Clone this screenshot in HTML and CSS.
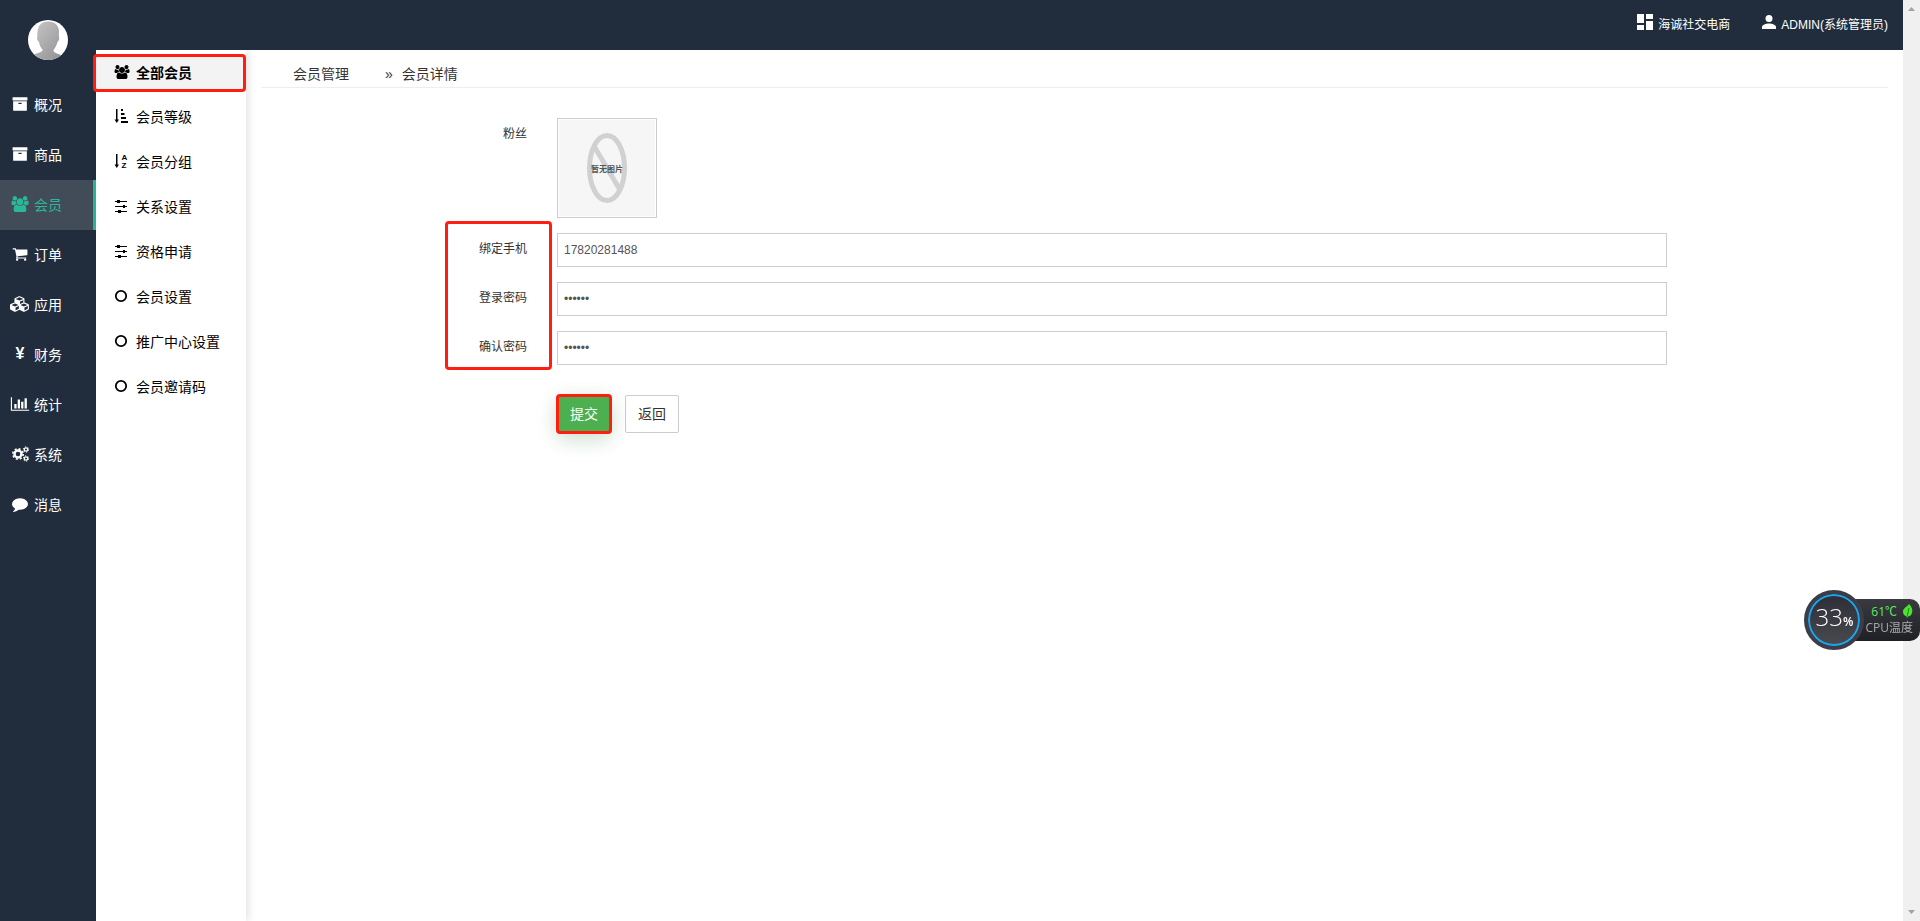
FILE: index.html
```
<!DOCTYPE html>
<html lang="zh-CN">
<head>
    <meta charset="UTF-8">
    <meta name="viewport" content="width=device-width, initial-scale=1.0">
    <title>会员详情</title>
    <link rel="stylesheet" href="styles.css">
</head>
<body>
    <!-- Shared icons -->
    <svg class="sprite" width="0" height="0" aria-hidden="true">
        <symbol id="i-users" viewBox="0 0 1920 1792"><path d="M593 896q-162 5-265 128h-134q-82 0-138-40.5t-56-118.5q0-353 124-353 6 0 43.5 21t97.5 42.5 119 21.5q67 0 133-23-5 37-5 66 0 159 93 256zm1071 637q0 120-73 189.500t-194 69.500h-874q-121 0-194-69.500t-73-189.500q0-53 3.500-103.500t14-109 26.500-108.500 43-97.500 62-81 85.500-53.500 111.500-20q10 0 43 21.500t73 48 107 48 135 21.500 135-21.500 107-48 73-48 43-21.500q61 0 111.500 20t85.500 53.500 62 81 43 97.500 26.500 108.500 14 109 3.500 103.500zm-1024-1277q0 106-75 181t-181 75-181-75-75-181 75-181 181-75 181 75 75 181zm704 384q0 159-112.500 271.500t-271.500 112.500-271.500-112.500-112.500-271.500 112.500-271.500 271.500-112.500 271.500 112.500 112.500 271.500zm576 225q0 78-56 118.500t-138 40.500h-134q-103-123-265-128 93-97 93-256 0-29-5-66 66 23 133 23 59 0 119-21.500t97.500-42.500 43.500-21q124 0 124 353zm-128-609q0 106-75 181t-181 75-181-75-75-181 75-181 181-75 181 75 75 181z"/></symbol>
        <symbol id="i-archive" viewBox="0 0 1792 1792"><path d="M1088 832q0-26-19-45t-45-19h-256q-26 0-45 19t-19 45 19 45 45 19h256q26 0 45-19t19-45zm576-192v960q0 26-19 45t-45 19h-1408q-26 0-45-19t-19-45v-960q0-26 19-45t45-19h1408q26 0 45 19t19 45zm64-448v256q0 26-19 45t-45 19h-1536q-26 0-45-19t-19-45v-256q0-26 19-45t45-19h1536q26 0 45 19t19 45z"/></symbol>
        <symbol id="i-sliders" viewBox="0 0 14 14"><path d="M1 2h12v1H1zM1 7h12v1H1zM1 12h12v1H1zM3 1h3v3H3zM9 6h2v3H9zM4 11h3v3H4z"/></symbol>
        <symbol id="i-circle" viewBox="0 0 14 14"><circle cx="7" cy="7" r="5.200" fill="none" stroke="currentColor" stroke-width="1.800"/></symbol>
    </svg>

    <div class="page">
        <nav class="sidebar">
            <div class="avatar">
                <svg width="40" height="40" viewBox="0 0 40 40">
                    <defs>
                        <linearGradient id="person" x1="0" y1="0" x2="1" y2="1">
                            <stop offset="0" stop-color="#c9c9c9"/>
                            <stop offset="1" stop-color="#8d8e90"/>
                        </linearGradient>
                    </defs>
                    <path fill="url(#person)" d="M20 1.500c7 0 11 4 11 10 0 2-.3 4 0 5.500.6 2-.4 4-1.500 5-1 4-3 6.500-4 8-.5 2 2 3 9 5.500l2 5H3l2-6c7-2 10-3 9.500-5-1.500-1.500-3-4-3.500-7.500-1.500-1.500-2.500-3.500-1.700-5.500C9 5.500 13 1.500 20 1.500z"/>
                </svg>
            </div>
            <a href="#"><svg><use href="#i-archive"/></svg>概况</a>
            <a href="#"><svg><use href="#i-archive"/></svg>商品</a>
            <a href="#" class="active"><svg><use href="#i-users"/></svg>会员</a>
            <a href="#"><svg viewBox="0 0 1792 1792"><path d="M704 1536q0 52-38 90t-90 38-90-38-38-90 38-90 90-38 90 38 38 90zm896 0q0 52-38 90t-90 38-90-38-38-90 38-90 90-38 90 38 38 90zm128-1088v512q0 24-16.500 42.500t-40.500 21.500l-1044 122q13 60 13 70 0 16-24 64h920q26 0 45 19t19 45-19 45-45 19h-1024q-26 0-45-19t-19-45q0-11 8-31.500t16-36 21.500-40 15.500-29.500l-177-823h-204q-26 0-45-19t-19-45 19-45 45-19h256q16 0 28.500 6.500t19.500 15.500 13 24.500 8 26 5.500 29.500 4.500 26h1201q26 0 45 19t19 45z"/></svg>订单</a>
            <a href="#"><svg viewBox="0 0 2304 1792"><path d="M640 1632l384-192v-314l-384 164v342zm-64-454l404-173-404-173-404 173zm1088 454l384-192v-314l-384 164v342zm-64-454l404-173-404-173-404 173zm-448-293l384-165v-266l-384 164v267zm-64-379l441-189-441-189-441 189zm1088 518v416q0 36-19 67t-52 47l-448 224q-25 14-57 14t-57-14l-448-224q-4-2-7-4-2 2-7 4l-448 224q-25 14-57 14t-57-14l-448-224q-33-16-52-47t-19-67v-416q0-38 21.500-70t56.500-48l434-186v-400q0-38 21.500-70t56.500-48l448-192q23-10 50-10t50 10l448 192q35 16 56.500 48t21.500 70v400l434 186q36 16 57 48t21 70z"/></svg>应用</a>
            <a href="#"><span class="yen">¥</span>财务</a>
            <a href="#"><svg viewBox="0 0 2048 1792"><path d="M640 896v512h-256v-512h256zm384-512v1024h-256v-1024h256zm1024 1152v128h-2048v-1536h128v1408h1920zm-640-896v768h-256v-768h256zm384-384v1152h-256v-1152h256z"/></svg>统计</a>
            <a href="#"><svg viewBox="0 0 20 16">
                <g fill="none" stroke="currentColor">
                    <circle cx="8" cy="8" r="3.500" stroke-width="2.400"/>
                    <circle cx="8" cy="8" r="5.200" stroke-width="1.600" stroke-dasharray="2 2.084"/>
                    <circle cx="16" cy="3.500" r="1.700" stroke-width="1.300"/>
                    <circle cx="16" cy="3.500" r="2.700" stroke-width="1" stroke-dasharray="1.300 1.527"/>
                    <circle cx="16" cy="12.500" r="1.700" stroke-width="1.300"/>
                    <circle cx="16" cy="12.500" r="2.700" stroke-width="1" stroke-dasharray="1.300 1.527"/>
                </g>
            </svg>系统</a>
            <a href="#"><svg viewBox="0 0 1792 1792"><path d="M1792 896q0 174-120 321.500t-326 233-450 85.500q-70 0-145-8-198 175-460 242-49 14-114 22h-5q-15 0-27-10.500t-16-27.500v-1q-3-4-.5-12t2-10 4.500-9.500l6-9 7-8.500 8-9q7-8 31-34.500t34.500-38 31-39.500 32.500-51 27-59 26-76q-157-89-247.500-220t-90.500-281q0-174 120-321.500t326-233 450-85.500 450 85.500 326 233 120 321.500z"/></svg>消息</a>
        </nav>

        <div class="main">
            <header class="topbar">
                <a href="#"><svg width="16" height="16" viewBox="0 0 16 16"><path d="M0 0h7v9H0zM9 0h7v5H9zM0 11h7v5H0zM9 7h7v9H9z"/></svg>海诚社交电商</a>
                <a href="#"><svg width="14" height="15" viewBox="0 0 14 15"><circle cx="7" cy="4.500" r="3.500"/><path d="M0 15v-2c0-2.200 4-3.500 7-3.500s7 1.300 7 3.500v2z"/></svg>ADMIN(系统管理员)</a>
            </header>

            <div class="body">
                <aside class="submenu">
                    <a href="#" class="active"><svg><use href="#i-users"/></svg>全部会员</a>
                    <a href="#"><svg viewBox="0 0 14 14"><path d="M2 0h1.500v10.500H5L2.800 14 .5 10.500H2zM7 0h2v2H7zM7 4h3.500v2H7zM7 8h5v2H7zM7 12h7v2H7z"/></svg>会员等级</a>
                    <a href="#"><svg viewBox="0 0 14 14"><path d="M2 0h1.500v10.500H5L2.800 14 .5 10.500H2z"/><text x="7.500" y="6">A</text><text x="7.500" y="14">Z</text></svg>会员分组</a>
                    <a href="#"><svg><use href="#i-sliders"/></svg>关系设置</a>
                    <a href="#"><svg><use href="#i-sliders"/></svg>资格申请</a>
                    <a href="#"><svg><use href="#i-circle"/></svg>会员设置</a>
                    <a href="#"><svg><use href="#i-circle"/></svg>推广中心设置</a>
                    <a href="#"><svg><use href="#i-circle"/></svg>会员邀请码</a>
                </aside>

                <main class="content">
                    <div class="breadcrumb">
                        <a href="#">会员管理</a>
                        <span>»</span>
                        <span>会员详情</span>
                    </div>

                    <form class="form">
                        <div class="row">
                            <span class="label">粉丝</span>
                            <div class="thumb">
                                <svg width="96" height="96" viewBox="0 0 96 96">
                                    <g fill="none" stroke="#d1d1d1" stroke-width="5">
                                        <ellipse cx="48" cy="48" rx="17.500" ry="32.500"/>
                                        <path d="M35 26l26 44"/>
                                    </g>
                                    <text x="48" y="52" text-anchor="middle">暂无图片</text>
                                </svg>
                            </div>
                        </div>
                        <div class="marked">
                            <div class="row">
                                <label class="label" for="mobile">绑定手机</label>
                                <input type="text" id="mobile" value="17820281488">
                            </div>
                            <div class="row">
                                <label class="label" for="pwd">登录密码</label>
                                <input type="password" id="pwd" value="123456">
                            </div>
                            <div class="row">
                                <label class="label" for="pwd2">确认密码</label>
                                <input type="password" id="pwd2" value="123456">
                            </div>
                        </div>
                        <div class="row actions">
                            <div class="buttons">
                                <button type="submit" class="btn btn-submit">提交</button>
                                <button type="button" class="btn">返回</button>
                            </div>
                        </div>
                    </form>
                </main>
            </div>
        </div>

        <div class="scrollbar">
            <svg width="7" height="4" viewBox="0 0 7 4"><path d="M3.500 0L7 4H0z"/></svg>
            <svg width="7" height="4" viewBox="0 0 7 4"><path d="M0 0h7L3.500 4z"/></svg>
        </div>
    </div>

    <!-- Floating CPU monitor -->
    <div class="monitor">
        <div class="gauge"><span>33</span><b>%</b></div>
        <div class="temp">
            <div class="degree">61℃
                <svg width="10" height="14" viewBox="0 0 10 14"><path d="M6 0c3 3 4 6 3 9-.7 2.500-2.500 3.500-4 3.500L4 14l-.5-1.500C1 11.500 0 9.500 0 7.500 0 4 4 3 6 0z" fill="#4be32d"/><path d="M6 4L4 13" stroke="#2a7d20" fill="none"/></svg>
            </div>
            <div>CPU温度</div>
        </div>
    </div>
</body>
</html>
```
FILE: styles.css
```
*,
*::before,
*::after {
    box-sizing: border-box;
}

body {
    margin: 0;
    font-family: "Liberation Sans", "Noto Sans CJK SC", sans-serif;
    font-size: 14px;
    color: #333;
    background: #fff;
}

a {
    color: inherit;
    text-decoration: none;
}

svg {
    fill: currentColor;
}

.sprite {
    position: absolute;
}

.page {
    display: flex;
    min-height: 100vh;
}

/* Left navigation */
.sidebar {
    width: 96px;
    flex: none;
    background: #212d3d;
    color: #fff;
}

.avatar {
    width: 40px;
    height: 40px;
    margin: 20px auto;
    border-radius: 50%;
    overflow: hidden;
    background: #fff;
}

.sidebar a {
    display: flex;
    align-items: center;
    gap: 4px;
    height: 50px;
    padding: 0 0 3px 10px;
}

.sidebar a svg {
    width: 20px;
    height: 16px;
}

.sidebar .active {
    color: #2bb898;
    background: #424c59;
    border-right: 3px solid #2bb898;
}

.yen {
    width: 20px;
    font-size: 16px;
    font-weight: bold;
    text-align: center;
}

/* Top bar */
.main {
    flex: 1;
    display: flex;
    flex-direction: column;
}

.topbar {
    display: flex;
    justify-content: flex-end;
    gap: 32px;
    height: 50px;
    padding: 14px 15px 0;
    background: #212d3d;
    color: #fff;
    font-size: 12px;
    line-height: 22px;
}

.topbar a {
    display: flex;
    gap: 5px;
}

.body {
    flex: 1;
    display: flex;
}

/* Second level menu */
.submenu {
    width: 150px;
    flex: none;
    color: #000;
    box-shadow: 2px 0 8px rgba(0, 0, 0, 0.12);
    clip-path: inset(0 -10px 0 -4px);
}

.submenu a {
    display: flex;
    align-items: center;
    gap: 8px;
    height: 35px;
    margin: 5px 0 10px;
    padding: 0 0 3px 18px;
}

.submenu svg {
    width: 14px;
    height: 14px;
    overflow: visible;
}

.submenu text {
    font-size: 8px;
    font-weight: bold;
}

.submenu .active {
    position: relative;
    padding-bottom: 1px;
    font-weight: bold;
    background: #f3f3f3;
}

.submenu .active svg {
    width: 16px;
    height: 14px;
    margin-right: -2px;
}

/* Red highlight frames */
.submenu .active::after,
.marked::before,
.btn-submit::after {
    content: "";
    position: absolute;
    border: 3px solid #ff1e10;
    border-radius: 4px;
}

.submenu .active::after {
    inset: -1px 0 -2px -3px;
}

.marked::before {
    top: -12px;
    bottom: -5px;
    left: 184px;
    width: 107px;
}

.btn-submit::after {
    inset: -2px;
}

/* Content */
.content {
    flex: 1;
    padding: 0 15px;
}

.breadcrumb {
    display: flex;
    gap: 9px;
    height: 38px;
    padding-left: 32px;
    line-height: 48px;
    border-bottom: 1px solid #eee;
}

.breadcrumb a {
    margin-right: 27px;
}

.form {
    display: flex;
    flex-direction: column;
    gap: 15px;
    padding: 30px 221px 0 0;
    font-size: 12px;
}

.marked {
    position: relative;
    display: flex;
    flex-direction: column;
    gap: 15px;
}

.row {
    display: grid;
    grid-template-columns: 266px 1fr;
    gap: 30px;
}

.label {
    padding-top: 7px;
    line-height: 18px;
    text-align: right;
}

.row input {
    width: 100%;
    height: 34px;
    padding: 6px;
    border: 1px solid #ccc;
    font: 12px "Liberation Sans", sans-serif;
    color: #555;
}

.thumb {
    width: 100px;
    height: 100px;
    padding: 1px;
    border: 1px solid #ccc;
}

.thumb svg {
    display: block;
    background: #f6f6f6;
}

.thumb text {
    font-size: 8px;
    font-weight: bold;
    fill: #555;
}

.actions {
    padding-top: 15px;
}

.buttons {
    grid-column: 2;
    display: flex;
    gap: 14px;
}

.btn {
    height: 38px;
    padding: 0 12px 2px;
    border: 1px solid #ccc;
    border-radius: 2px;
    background: #fff;
    font: 14px "Noto Sans CJK SC", sans-serif;
    color: #333;
}

.btn-submit {
    position: relative;
    border-color: #4caf50;
    background: #4caf50;
    color: #fff;
    box-shadow: 0 8px 22px rgba(76, 175, 80, 0.15), 0 4px 20px rgba(0, 0, 0, 0.1);
}

.scrollbar {
    width: 17px;
    flex: none;
    display: flex;
    flex-direction: column;
    justify-content: space-between;
    align-items: center;
    padding: 7px 0;
    background: #f0f0f0;
    color: #a3a3a3;
}

/* CPU monitor */
.monitor {
    position: fixed;
    right: 0;
    top: 590px;
    display: flex;
    align-items: center;
}

.gauge {
    z-index: 1;
    display: flex;
    align-items: baseline;
    justify-content: center;
    width: 60px;
    height: 60px;
    margin-right: -22px;
    border: 4px solid #3c3e47;
    border-radius: 50%;
    background: linear-gradient(#2c2d36, #4a4a50);
    box-shadow: inset 0 0 0 2px #1ba6ee;
    color: #fff;
    font-family: "Open Sans", sans-serif;
    line-height: 46px;
}

.gauge span {
    font-size: 24px;
    font-weight: 300;
}

.gauge b {
    font-size: 12px;
    font-weight: 600;
}

.temp {
    height: 42px;
    padding: 5px 7px 0 23px;
    border-radius: 0 10px 10px 0;
    background: linear-gradient(#3a3b41, #1f2024);
    color: #aaa;
    font: 12px/16px "Open Sans", "Noto Sans CJK SC", sans-serif;
}

.degree {
    display: flex;
    justify-content: flex-end;
    gap: 6px;
    color: #5fe860;
}
```
